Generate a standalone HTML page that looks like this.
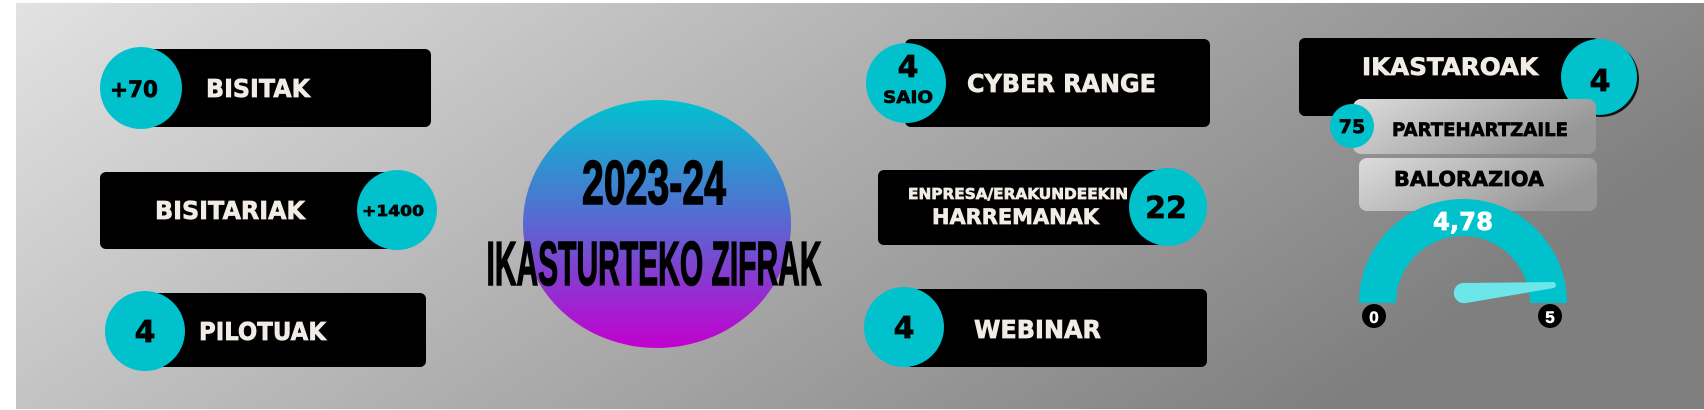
<!DOCTYPE html>
<html><head><meta charset="utf-8"><style>
html,body{margin:0;padding:0;background:#fff;}
svg{display:block;}
text{font-family:"DejaVu Sans","Liberation Sans",sans-serif;font-weight:bold;stroke:currentColor;stroke-width:0.7;}
.w{fill:#f1ece6;color:#f1ece6;}
.c{font-family:"Liberation Sans",sans-serif;stroke-width:1.6;}
</style></head><body>
<svg width="1704" height="410" viewBox="0 0 1704 410" xmlns="http://www.w3.org/2000/svg" color="#000">
<defs>
<linearGradient id="bg" x1="0" y1="0" x2="1" y2="0.35">
<stop offset="0" stop-color="#e2e2e2"/><stop offset="1" stop-color="#7f7f7f"/></linearGradient>
<linearGradient id="cg" x1="0" y1="0" x2="0" y2="1">
<stop offset="0" stop-color="#00c2cf"/><stop offset="0.5" stop-color="#5b66d1"/><stop offset="1" stop-color="#c200cf"/></linearGradient>
<linearGradient id="lg" x1="0" y1="0" x2="1" y2="0.4">
<stop offset="0" stop-color="#dcdcdc"/><stop offset="1" stop-color="#979797"/></linearGradient>
</defs>
<rect x="16" y="3" width="1688" height="406" fill="url(#bg)"/>

<!-- BISITAK -->
<rect x="140" y="49" width="291" height="78" rx="6" fill="#000"/>
<circle cx="141" cy="88" r="41" fill="#00c1cc"/>
<text x="110" y="97" font-size="22" textLength="48" lengthAdjust="spacingAndGlyphs">+70</text>
<text class="w" x="206" y="97" font-size="25" textLength="104" lengthAdjust="spacingAndGlyphs">BISITAK</text>

<!-- BISITARIAK -->
<rect x="100" y="172" width="302" height="77" rx="6" fill="#000"/>
<circle cx="397" cy="210" r="40" fill="#00c1cc"/>
<text class="w" x="155" y="219" font-size="25" textLength="150" lengthAdjust="spacingAndGlyphs">BISITARIAK</text>
<text x="362" y="216" font-size="15" textLength="62" lengthAdjust="spacingAndGlyphs">+1400</text>

<!-- PILOTUAK -->
<rect x="145" y="293" width="281" height="74" rx="6" fill="#000"/>
<circle cx="145" cy="331" r="40" fill="#00c1cc"/>
<text x="145" y="342" font-size="30" text-anchor="middle">4</text>
<text class="w" x="199" y="340" font-size="25" textLength="127" lengthAdjust="spacingAndGlyphs">PILOTUAK</text>

<!-- Center circle -->
<ellipse cx="657" cy="224" rx="134" ry="124" fill="url(#cg)"/>
<text class="c" x="654" y="204" font-size="62" textLength="144" lengthAdjust="spacingAndGlyphs" text-anchor="middle">2023-24</text>
<text class="c" x="654" y="285" font-size="62" textLength="335" lengthAdjust="spacingAndGlyphs" text-anchor="middle">IKASTURTEKO ZIFRAK</text>

<!-- CYBER RANGE -->
<rect x="905" y="39" width="305" height="88" rx="6" fill="#000"/>
<circle cx="906" cy="83" r="40" fill="#00c1cc"/>
<text x="908" y="77" font-size="30" text-anchor="middle">4</text>
<text x="908" y="103" font-size="17" text-anchor="middle" textLength="50" lengthAdjust="spacingAndGlyphs">SAIO</text>
<text class="w" x="967" y="92" font-size="25" textLength="189" lengthAdjust="spacingAndGlyphs">CYBER RANGE</text>

<!-- HARREMANAK -->
<rect x="878" y="170" width="296" height="75" rx="6" fill="#000"/>
<circle cx="1168" cy="207" r="39" fill="#00c1cc"/>
<text class="w" x="908" y="199" font-size="15" textLength="220" lengthAdjust="spacingAndGlyphs">ENPRESA/ERAKUNDEEKIN</text>
<text class="w" x="932" y="224" font-size="21" textLength="167" lengthAdjust="spacingAndGlyphs">HARREMANAK</text>
<text x="1166" y="218" font-size="30" text-anchor="middle">22</text>

<!-- WEBINAR -->
<rect x="905" y="289" width="302" height="78" rx="6" fill="#000"/>
<circle cx="904" cy="327" r="40" fill="#00c1cc"/>
<text x="904" y="338" font-size="30" text-anchor="middle">4</text>
<text class="w" x="974" y="338" font-size="25" textLength="127" lengthAdjust="spacingAndGlyphs">WEBINAR</text>

<!-- IKASTAROAK -->
<rect x="1299" y="38" width="300" height="78" rx="6" fill="#000"/>
<circle cx="1601" cy="79" r="38" fill="#111"/>
<circle cx="1599" cy="77" r="38" fill="#00c1cc"/>
<text class="w" x="1362" y="75" font-size="24" textLength="176" lengthAdjust="spacingAndGlyphs">IKASTAROAK</text>
<text x="1600" y="91" font-size="30" text-anchor="middle">4</text>

<!-- PARTEHARTZAILE -->
<rect x="1353" y="99" width="243" height="55" rx="8" fill="url(#lg)"/>
<circle cx="1352" cy="126" r="22" fill="#00c1cc"/>
<text x="1352" y="133" font-size="19" text-anchor="middle">75</text>
<text x="1392" y="136" font-size="19" textLength="176" lengthAdjust="spacingAndGlyphs">PARTEHARTZAILE</text>

<!-- BALORAZIOA -->
<rect x="1359" y="158" width="238" height="53" rx="8" fill="url(#lg)"/>
<text x="1394" y="186" font-size="20" textLength="150" lengthAdjust="spacingAndGlyphs">BALORAZIOA</text>

<!-- Gauge -->
<path d="M1359 303 A104 104 0 0 1 1567 303 L1530 303 A67 67 0 0 0 1396 303 Z" fill="#00c1cc"/>
<text x="1463" y="230" font-size="25" text-anchor="middle" fill="#fff" color="#fff" textLength="60" lengthAdjust="spacingAndGlyphs">4,78</text>
<path d="M1462 283 L1554 282 Q1558 285 1554 288 L1466 303 A10 10 0 0 1 1462 283 Z" fill="#6ce6e8"/>
<circle cx="1374" cy="316" r="12" fill="#000"/>
<text class="c" x="1374" y="323" font-size="17" fill="#fff" color="#fff" style="stroke-width:0.5" text-anchor="middle">0</text>
<circle cx="1550" cy="316" r="12" fill="#000"/>
<text class="c" x="1550" y="323" font-size="17" fill="#fff" color="#fff" style="stroke-width:0.5" text-anchor="middle">5</text>
</svg>
</body></html>
